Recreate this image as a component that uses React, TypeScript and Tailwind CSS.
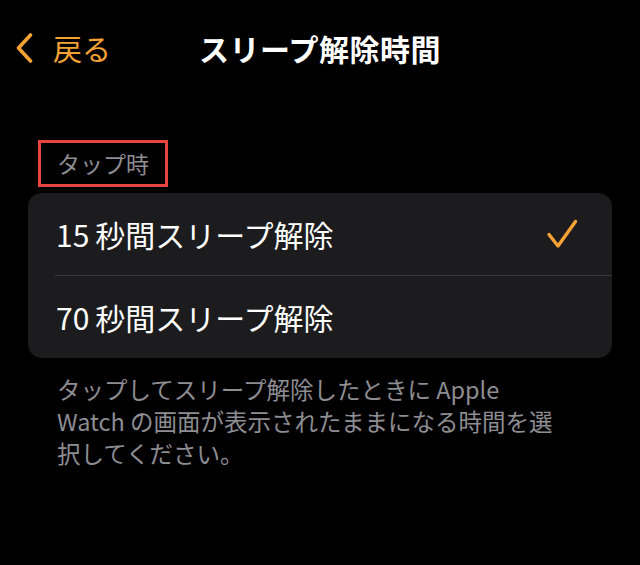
const OPTIONS = [
  { num: '15', label: '秒間スリープ解除', checked: true },
  { num: '70', label: '秒間スリープ解除', checked: false },
];

export default function App() {
  return (
    <div
      className="w-[640px] h-[565px] bg-black text-white overflow-hidden"
      style={{ fontFamily: '"Noto Sans CJK JP", "Noto Sans", sans-serif' }}
    >
      {/* Nav bar */}
      <header className="grid grid-cols-[1fr_auto_1fr] items-center h-[56px] mt-[20px]">
        <button className="flex items-center gap-[20px] pl-[16px] text-[#f5a133]">
          <svg width="17" height="30" viewBox="0 0 17 30" fill="none">
            <polyline
              points="14.5,2 2.5,15 14.5,28"
              stroke="currentColor"
              strokeWidth="3.6"
              strokeLinecap="round"
              strokeLinejoin="round"
            />
          </svg>
          <span className="text-[29px] leading-none">戻る</span>
        </button>
        <h1 className="text-[30px] font-bold leading-none tracking-[0.5px]">スリープ解除時間</h1>
        <div />
      </header>

      {/* Section label */}
      <div className="mt-[64px] ml-[38px] w-[130px] h-[47px] border-[3px] border-[#e8453c] flex items-center justify-center">
        <span className="text-[23px] text-[#8d8d92] leading-none">タップ時</span>
      </div>

      {/* Options */}
      <div className="mt-[6px] mx-[28px] rounded-[14px] bg-[#1c1c1e] overflow-hidden">
        {OPTIONS.map(({ num, label, checked }, i) => (
          <div key={num}>
            {i > 0 && <div className="ml-[27px] h-px bg-[#38383b]" />}
            <div className="h-[82px] flex items-center justify-between pl-[28px] pr-[34px]">
              <span className="text-[30px] leading-none">
                {num}
                <span className="ml-[6px]">{label}</span>
              </span>
              {checked && (
                <svg width="32" height="30" viewBox="0 0 32 30" fill="none">
                  <polyline
                    points="3,15.5 12,27 29.5,2.5"
                    stroke="#f5a133"
                    strokeWidth="3.4"
                    strokeLinecap="round"
                    strokeLinejoin="round"
                  />
                </svg>
              )}
            </div>
          </div>
        ))}
      </div>

      {/* Footer */}
      <p className="mt-[15px] ml-[57px] mr-[60px] text-[23.5px] leading-[32px] text-[#8d8d92]">
        タップしてスリープ解除したときに Apple
        <br />
        Watch の画面が表示されたままになる時間を選
        <br />
        択してください。
      </p>
    </div>
  );
}
